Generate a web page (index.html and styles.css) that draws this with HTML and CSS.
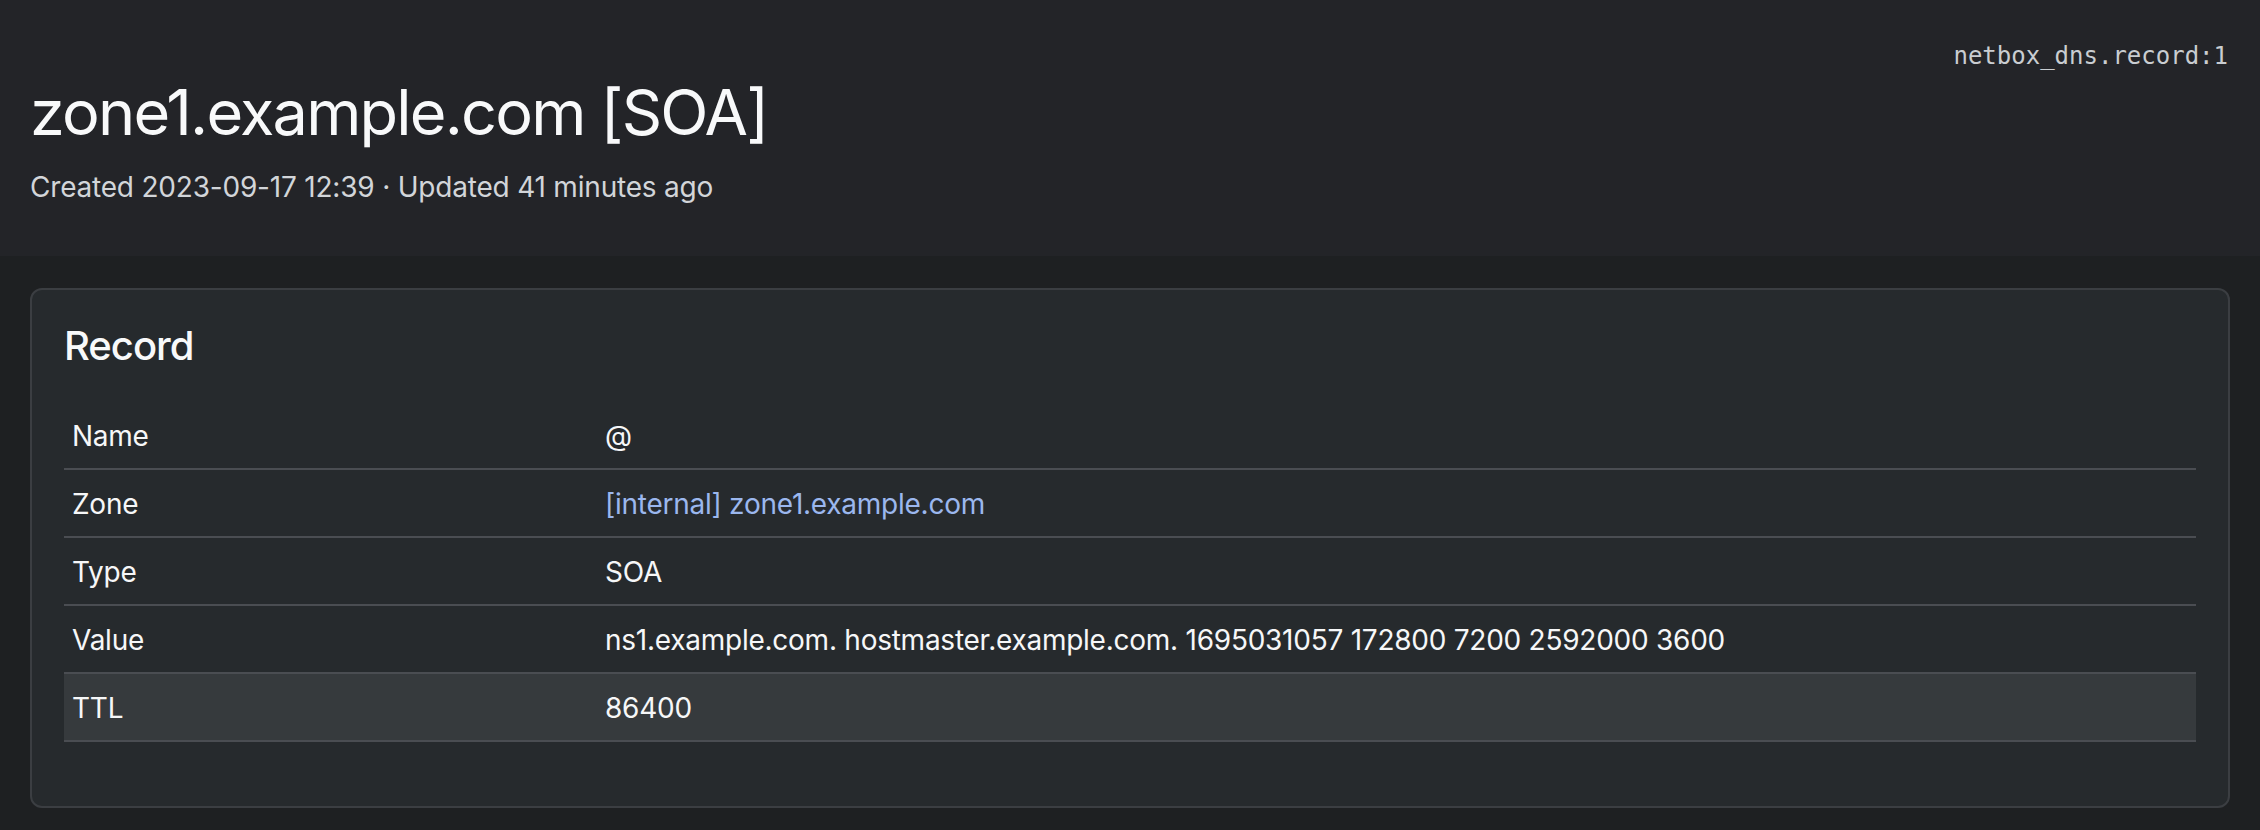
FILE: index.html
```html
<!DOCTYPE html>
<html lang="en">
<head>
<meta charset="utf-8">
<title>zone1.example.com [SOA]</title>
<link rel="stylesheet" href="styles.css">
</head>
<body>
  <header class="page-header">
    <div class="object-id-row"><code class="object-id">netbox_dns.record:1</code></div>
    <h1 class="page-title">zone1.example.com [SOA]</h1>
    <p class="page-meta">Created 2023-09-17 12:39 · Updated 41 minutes ago</p>
  </header>
  <main class="content">
    <section class="card">
      <h2 class="card-title">Record</h2>
      <table class="attr-table">
        <tbody>
          <tr><th>Name</th><td>@</td></tr>
          <tr><th>Zone</th><td><a class="link" href="#">[internal] zone1.example.com</a></td></tr>
          <tr><th>Type</th><td>SOA</td></tr>
          <tr><th>Value</th><td>ns1.example.com. hostmaster.example.com. 1695031057 172800 7200 2592000 3600</td></tr>
          <tr class="is-hover"><th>TTL</th><td>86400</td></tr>
        </tbody>
      </table>
    </section>
  </main>
</body>
</html>
```

FILE: styles.css
```css
html, body {
  margin: 0;
  padding: 0;
}
body {
  background: #1e2022;
  color: #f4f5f6;
  font-family: Inter, "Liberation Sans", Arial, sans-serif;
  font-size: 28px;
  line-height: 42px;
  letter-spacing: -0.25px;
  min-height: 830px;
}
.page-header {
  background: #232428;
  padding: 38px 32px 48px 30px;
  height: 256px;
  box-sizing: border-box;
}
.object-id-row {
  display: flex;
  justify-content: flex-end;
  height: 36px;
}
.object-id {
  font-family: "DejaVu Sans Mono", "Liberation Mono", monospace;
  font-size: 24px;
  line-height: 36px;
  letter-spacing: 0;
  color: #c9cdd1;
}
.page-title {
  margin: 0;
  font-size: 63px;
  line-height: 77px;
  font-weight: 400;
  color: #f8f9fa;
  letter-spacing: -1.8px;
}
.page-meta {
  margin: 15px 0 0;
  font-size: 28px;
  line-height: 42px;
  letter-spacing: -0.2px;
  color: #d2d5d9;
}
.content {
  padding: 32px 30px 20px 30px;
}
.card {
  background: #262a2d;
  border: 2px solid #3b3e42;
  border-radius: 12px;
  padding: 32px;
}
.card-title {
  margin: 0 0 32px;
  font-size: 40px;
  line-height: 48px;
  font-weight: 500;
  letter-spacing: -1px;
  color: #f8f9fa;
}
.attr-table {
  width: 100%;
  border-collapse: collapse;
  margin-bottom: 32px;
}
.attr-table th,
.attr-table td {
  text-align: left;
  font-weight: 400;
  padding: 13px 8px 11px;
  border-bottom: 2px solid #4a4d52;
  color: #f6f7f8;
}
.attr-table th {
  width: 25%;
}
.attr-table tr.is-hover th,
.attr-table tr.is-hover td {
  background: #363a3d;
}
.link {
  color: #9bb7ee;
  text-decoration: none;
}
```
